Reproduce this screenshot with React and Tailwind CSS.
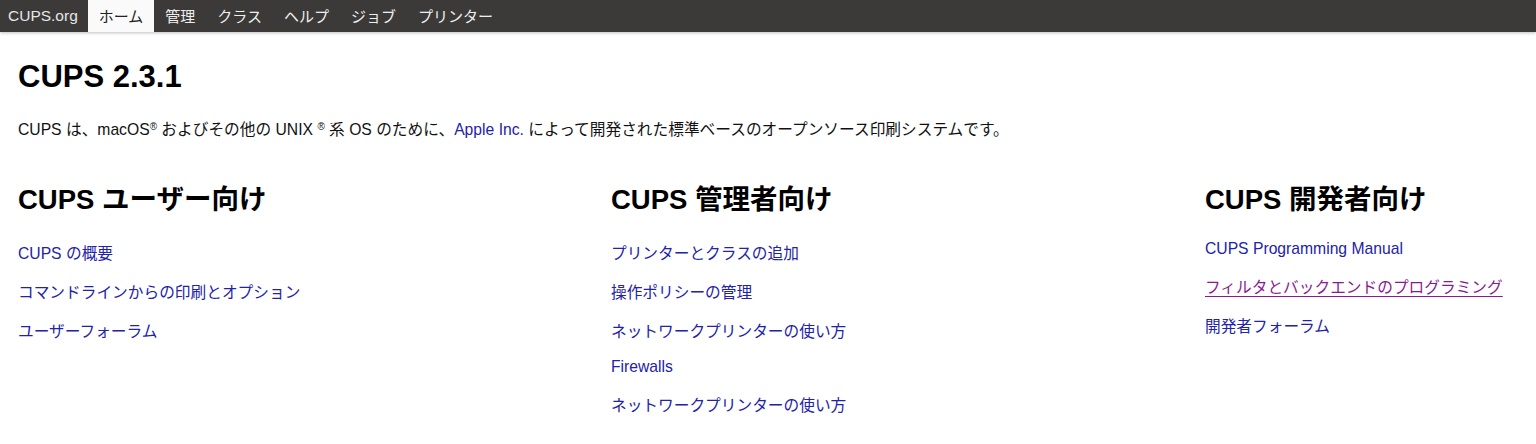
import React from 'react';

const font = { fontFamily: '"Liberation Sans", "Noto Sans CJK JP", sans-serif' };

const tabs = ['ホーム', '管理', 'クラス', 'ヘルプ', 'ジョブ', 'プリンター'];

const columns = [
  {
    title: 'CUPS ユーザー向け',
    top: 'mt-[28px]',
    links: [
      { text: 'CUPS の概要' },
      { text: 'コマンドラインからの印刷とオプション' },
      { text: 'ユーザーフォーラム' },
    ],
  },
  {
    title: 'CUPS 管理者向け',
    top: 'mt-[28px]',
    links: [
      { text: 'プリンターとクラスの追加' },
      { text: '操作ポリシーの管理' },
      { text: 'ネットワークプリンターの使い方' },
      { text: 'Firewalls', tight: true },
      { text: 'ネットワークプリンターの使い方' },
    ],
  },
  {
    title: 'CUPS 開発者向け',
    top: 'mt-[23px]',
    links: [
      { text: 'CUPS Programming Manual' },
      { text: 'フィルタとバックエンドのプログラミング', visited: true },
      { text: '開発者フォーラム' },
    ],
  },
];

export default function App() {
  return (
    <div className="min-h-[444px] bg-white text-black" style={font}>
      {/* top bar */}
      <div className="flex h-[32px] items-stretch bg-[#3b3a39] shadow-[0_1px_3px_rgba(0,0,0,0.25)]">
        <span className="pl-[8px] pr-[10px] pt-[4px] text-[15.5px] text-[#e6e6e6]">CUPS.org</span>
        {tabs.map((t, i) => (
          <span
            key={t}
            className={
              i === 0
                ? 'flex items-center bg-[#fafafa] px-[11px] pt-[2px] text-[15px] text-[#222]'
                : 'flex items-center px-[11px] pt-[2px] text-[15px] text-[#eeeeee]'
            }
          >
            {t}
          </span>
        ))}
      </div>

      <div className="px-[18px]">
        <h1 className="mt-[28px] text-[31px] font-bold leading-[34px]">CUPS 2.3.1</h1>
        <p className="mt-[26px] text-[15.7px] leading-[20px] text-[#111]">
          CUPS は、macOS<sup className="text-[10px] leading-none">®</sup> およびその他の UNIX{' '}
          <sup className="text-[10px] leading-none">®</sup> 系 OS のために、
          <a className="text-[#2222aa]">Apple Inc.</a> によって開発された標準ベースのオープンソース印刷システムです。
        </p>

        <div className="mt-[44px] grid grid-cols-[593px_594px_1fr]">
          {columns.map((c) => (
            <div key={c.title}>
              <h2 className="text-[27.5px] font-bold leading-[32px]">{c.title}</h2>
              <ul className={c.top}>
                {c.links.map((l, i) => (
                  <li
                    key={i}
                    className={
                      'text-[15.7px] leading-[20px] ' +
                      (i === 0 ? '' : l.tight ? 'mt-[15px]' : 'mt-[19px]')
                    }
                  >
                    <a
                      className={
                        l.visited
                          ? 'text-[#8a1a8f] underline underline-offset-[3px]'
                          : 'text-[#2222aa]'
                      }
                    >
                      {l.text}
                    </a>
                  </li>
                ))}
              </ul>
            </div>
          ))}
        </div>
      </div>
    </div>
  );
}
